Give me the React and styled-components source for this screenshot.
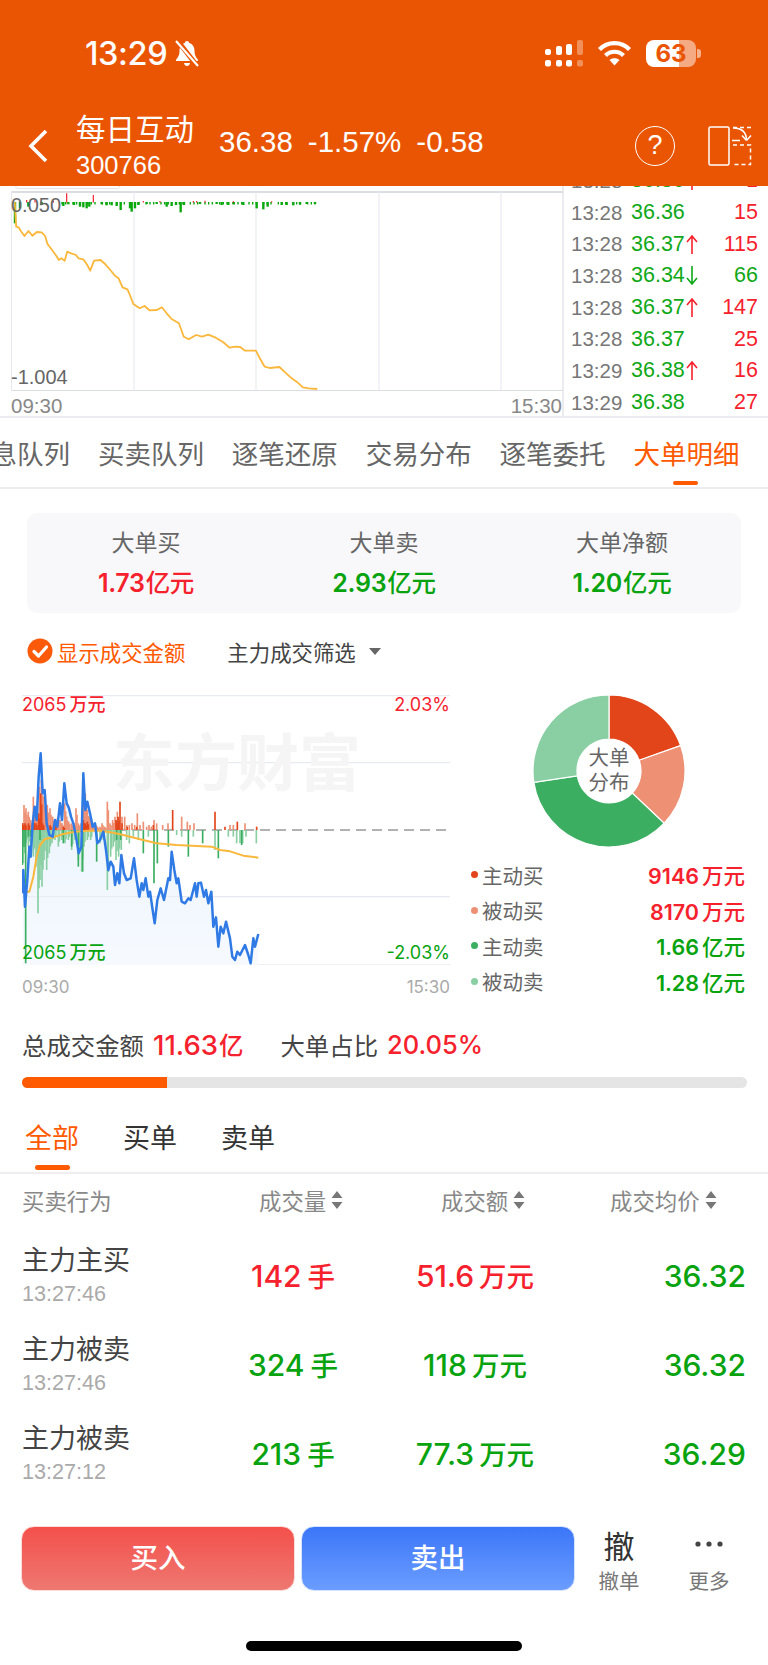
import React from 'react'
import styled, { createGlobalStyle } from 'styled-components'

const SANS = `"Liberation Sans", "Noto Sans CJK SC", sans-serif`
const MEDIUM = `Inter, "Noto Sans CJK SC", sans-serif`
const ORANGE = '#ff5a00'
const RED = '#f5222d'
const GREEN = '#08a30f'

const Global = createGlobalStyle`
  html, body { margin: 0; padding: 0; background: #fff; }
  body { font-family: ${SANS}; color: #333; }
  * { box-sizing: border-box; }
`

const Page = styled.div`
  position: relative;
  width: 768px;
  height: 1665px;
  overflow: hidden;
  background: #fff;
`

/* header */
const Header = styled.header`
  position: relative;
  z-index: 2;
  height: 186px;
  background: #ea5504;
  color: #fff;
`
const StatusBar = styled.div`
  display: flex;
  align-items: center;
  height: 106px;
  padding: 0 67px 0 85px;
`
const Clock = styled.span`
  font: 500 32.5px ${MEDIUM};
  letter-spacing: -0.4px;
`
const StatusRight = styled.div`
  display: flex;
  align-items: center;
  margin-left: auto;
`
const Battery = styled.div`
  position: relative;
  width: 50px;
  height: 27px;
  margin-left: 14px;
  border-radius: 8px;
  overflow: hidden;
  background: linear-gradient(90deg, #fff 66%, rgba(255, 255, 255, 0.5) 66%);
  color: #ea5504;
  font: 700 24px/27px ${MEDIUM};
  text-align: center;
`
const BatteryNub = styled.div`
  width: 4px;
  height: 9px;
  margin-left: 1px;
  border-radius: 0 3px 3px 0;
  background: rgba(255, 255, 255, 0.55);
`
const NavRow = styled.div`
  display: flex;
  align-items: center;
  height: 80px;
  padding: 0 16px 0 28px;
`
const Titles = styled.div`
  width: 120px;
  height: 80px;
  margin-left: 28px;
  padding-top: 7px;
`
const Name = styled.div`
  font-size: 29.5px;
  line-height: 34px;
  white-space: nowrap;
`
const Code = styled.div`
  font-size: 25.5px;
  line-height: 36px;
`
const Quote = styled.div`
  display: flex;
  gap: 15px;
  margin: 0 0 9px 23px;
  font-size: 29.5px;
`
const Help = styled.div`
  width: 40px;
  height: 40px;
  margin-left: auto;
  margin-right: 33px;
  border: 1.5px solid #fff;
  border-radius: 50%;
  font-size: 27px;
  line-height: 37px;
  text-align: center;
`

/* minute chart and tape */
const TopPanel = styled.section`
  position: relative;
  display: flex;
  height: 232px;
  overflow: hidden;
  border-bottom: 2px solid #ececf0;
`
const ChartSide = styled.div`
  position: relative;
  width: 564px;
  padding: 5px 0 0 11px;
  border-right: 2px solid #ececf0;
`
const Peeking = styled.div`
  position: absolute;
  left: 15px;
  top: -8px;
  width: 105px;
  height: 11px;
  border: 1px solid #e6e6e6;
  border-radius: 3px;
`
const AxisLabel = styled.span`
  position: absolute;
  left: ${p => p.$left}px;
  top: ${p => p.$top}px;
  color: #666;
  font-size: 20px;
  line-height: 22px;
`
const TimeAxis = styled.div`
  display: flex;
  justify-content: space-between;
  margin-top: 3px;
  color: #888;
  font-size: 20.5px;
  line-height: 24px;
`
const Tape = styled.div`
  flex: 1;
  margin-top: -21px;
  padding: 0 10px 0 7px;
`
const TapeRow = styled.div`
  display: flex;
  align-items: center;
  height: 31.7px;
  font-size: 21.5px;
`
const TapeTime = styled.span`
  width: 60px;
  color: #777;
  font-size: 20.5px;
`
const TapePrice = styled.span`
  color: #10a818;
`
const TapeVol = styled.span`
  margin-left: auto;
  color: ${p => (p.$down ? '#10a818' : RED)};
`
const TapeArrow = styled.svg`
  margin-left: 1px;
  stroke: ${p => (p.$down ? '#10a818' : RED)};
  transform: ${p => (p.$down ? 'rotate(180deg)' : 'none')};
`

/* tabs */
const TabRow = styled.nav`
  display: flex;
  gap: 27.9px;
  height: 71px;
  margin-left: -36px;
  width: 804px;
  border-bottom: 2px solid #ececf0;
`
const Tab = styled.div`
  position: relative;
  flex: none;
  color: ${p => (p.$active ? ORANGE : '#666')};
  font-size: 26.5px;
  line-height: 74px;
  white-space: nowrap;
  &::after {
    content: '';
    display: ${p => (p.$active ? 'block' : 'none')};
    position: absolute;
    left: 40px;
    bottom: 2px;
    width: 25px;
    height: 4px;
    border-radius: 2px;
    background: ${ORANGE};
  }
`

/* summary */
const Summary = styled.div`
  display: grid;
  grid-template-columns: repeat(3, 1fr);
  width: 714px;
  height: 100px;
  margin: 24px 0 0 27px;
  padding-top: 14px;
  border-radius: 11px;
  background: #f8f8fa;
  text-align: center;
`
const SummaryLabel = styled.div`
  color: #666;
  font-size: 23px;
  line-height: 32px;
`
const SummaryValue = styled.div`
  margin-top: 8px;
  color: ${p => p.$color};
  font: 600 25px/32px ${MEDIUM};
  letter-spacing: -0.3px;
`
const FilterRow = styled.div`
  display: flex;
  align-items: center;
  height: 26px;
  margin: 25px 0 0 27px;
`
const FilterOn = styled.span`
  margin-left: 4px;
  color: ${ORANGE};
  font-size: 21.4px;
`
const FilterOption = styled.span`
  margin: 0 13px 0 42px;
  color: #444;
  font-size: 21.4px;
`

/* big order chart */
const ChartRow = styled.section`
  display: flex;
  gap: 20px;
  margin: 31px 0 0 22px;
`
const ChartBox = styled.div`
  position: relative;
  width: 428px;
  height: 270px;
`
const ChartLabel = styled.span`
  position: absolute;
  ${p => (p.$right ? 'right: 0' : 'left: 0')};
  ${p => (p.$bottom ? 'bottom: 1px' : 'top: -1px')};
  color: ${p => p.$color};
  font: 400 18px/22px ${MEDIUM};
`
const Watermark = styled.span`
  position: absolute;
  left: 91px;
  top: 29px;
  color: #f5f5f6;
  font: 700 62px/70px "Noto Sans CJK SC", sans-serif;
  white-space: nowrap;
`
const SmallAxis = styled.div`
  display: flex;
  justify-content: space-between;
  margin-top: 10px;
  color: #aaa;
  font: 400 17px/24px ${MEDIUM};
`
const Side = styled.div`
  width: 275px;
`
const PieBox = styled.div`
  position: relative;
  width: 152px;
  height: 152px;
  margin-left: 63px;
`
const PieCenter = styled.div`
  position: absolute;
  inset: 0;
  display: flex;
  align-items: center;
  justify-content: center;
  padding-bottom: 2px;
  color: #666;
  font-size: 20.5px;
  line-height: 25px;
  text-align: center;
`
const Legend = styled.div`
  margin-top: 10px;
`
const LegendRow = styled.div`
  display: flex;
  align-items: center;
  height: 35.5px;
`
const Dot = styled.i`
  width: 7px;
  height: 7px;
  margin: 0 4px 0 1px;
  border-radius: 50%;
  background: ${p => p.$color};
`
const LegendName = styled.span`
  color: #666;
  font-size: 20.5px;
`
const LegendValue = styled.span`
  margin-left: auto;
  color: ${p => p.$color};
  font: 600 21.5px ${MEDIUM};
`
const Unit = styled.span`
  margin-left: ${p => p.$gap ?? 3}px;
  ${p => p.$size && `font-size: ${p.$size}px;`}
  font-weight: 500;
`

/* total */
const TotalRow = styled.div`
  display: flex;
  align-items: center;
  height: 30px;
  margin: 30px 0 0 22px;
  font-size: 24.4px;
`
const TotalLabel = styled.span`
  margin-left: ${p => p.$offset || 0}px;
  color: #444;
`
const TotalValue = styled.span`
  margin-left: 9px;
  color: ${RED};
  font: 500 ${p => p.$size}px ${MEDIUM};
`
const Track = styled.div`
  width: 725px;
  height: 11px;
  margin: 18px 0 0 22px;
  border-radius: 6px;
  overflow: hidden;
  background: #e5e5e5;
`
const Fill = styled.div`
  height: 100%;
  background: ${ORANGE};
`

/* trade list */
const SubTabs = styled.nav`
  display: flex;
  gap: 44px;
  height: 68px;
  margin-top: 18px;
  padding: 15px 0 0 25px;
  border-bottom: 2px solid #eeeef0;
`
const SubTab = styled.div`
  position: relative;
  color: ${p => (p.$active ? ORANGE : '#333')};
  font-size: 27px;
  line-height: 36px;
  &::after {
    content: '';
    display: ${p => (p.$active ? 'block' : 'none')};
    position: absolute;
    left: 10px;
    top: 44px;
    width: 35px;
    height: 5px;
    border-radius: 3px;
    background: ${ORANGE};
  }
`
const HeadRow = styled.div`
  display: grid;
  grid-template-columns: 237px 182px 169px 1fr;
  align-items: center;
  height: 57px;
  padding: 0 0 6px 22px;
  color: #888;
  font-size: 22.4px;
`
const HeadCell = styled.div`
  display: flex;
  align-items: center;
  gap: 5px;
`
const TradeRow = styled.div`
  display: grid;
  grid-template-columns: 178px 186px 178px 182px;
  height: 89px;
  padding-left: 22px;
`
const Action = styled.div`
  padding-top: 13px;
`
const ActionName = styled.div`
  color: #444;
  font-size: 27px;
  line-height: 34px;
`
const ActionTime = styled.div`
  margin-top: 2px;
  color: #aaa;
  font-size: 21.6px;
  line-height: 28px;
`
const TradeValue = styled.div`
  padding-top: 28px;
  color: ${p => p.$color};
  font: 500 30px/34px ${MEDIUM};
  text-align: ${p => p.$align || 'center'};
`

/* bottom actions */
const ActionBar = styled.div`
  display: flex;
  gap: 6px;
  margin: 28px 0 0 21px;
`
const TradeButton = styled.div`
  width: 274px;
  height: 65px;
  border: 1px solid ${p => (p.$sell ? '#d6e3ff' : '#fcdcdb')};
  border-radius: 13px;
  background: ${p =>
    p.$sell
      ? 'linear-gradient(180deg, #3b76f8, #6b9dff)'
      : 'linear-gradient(180deg, #f4504b, #ee7871)'};
  color: #fff;
  font-size: 27.5px;
  font-weight: 500;
  line-height: 63px;
  text-align: center;
`
const Tools = styled.div`
  display: flex;
  margin-left: -7px;
`
const Tool = styled.div`
  display: flex;
  flex-direction: column;
  align-items: center;
  width: 90px;
`
const ToolGlyph = styled.div`
  display: flex;
  align-items: center;
  justify-content: center;
  height: 36px;
  color: #333;
  font-size: 31px;
`
const ToolName = styled.div`
  margin-top: 7px;
  color: #777;
  font-size: 20.5px;
  line-height: 26px;
`
const HomeBar = styled.div`
  width: 276px;
  height: 10px;
  margin: 46px 0 0 246px;
  border-radius: 5px;
  background: #000;
`

/* chart data, digitised from the picture */
const minuteLine = [[30,95],[33,170],[38,172],[42,182],[50,198],[58,183],[66,197],[75,186],[85,187],[92,198],[97,222],[105,238],[115,258],[120,270],[125,265],[132,272],[137,245],[145,250],[155,255],[160,265],[170,268],[178,285],[184,302],[192,272],[205,270],[215,283],[225,300],[235,318],[242,325],[250,352],[260,358],[265,375],[272,402],[285,415],[295,408],[305,421],[320,420],[330,412],[340,430],[350,447],[365,460],[375,500],[385,508],[400,495],[412,500],[425,494],[440,503],[455,516],[468,533],[480,530],[490,531],[500,542],[522,542],[530,565],[540,590],[550,594],[570,591],[580,605],[595,625],[605,635],[618,652],[630,655],[647,657]]
  .map(([x, y]) => `${(x / 2.04 - 11).toFixed(1)},${((y - 63) / 3).toFixed(1)}`)
  .join(' ')
const minuteGreen = [[45,130],[60,85],[85,80],[125,75],[190,78],[205,73],[222,75],[240,80],[250,82],[260,85],[268,80],[305,73],[320,76],[335,76],[350,78],[362,90],[390,85],[395,95],[405,85],[415,75],[440,72],[470,72],[500,80],[515,78],[528,75],[542,97],[552,75],[600,70],[650,72],[665,75],[685,75],[700,73],[730,75],[770,85],[790,88],[803,80],[845,75],[860,75],[880,76],[900,74],[920,72],[945,70]]
const minuteTicks = Array.from({ length: 70 }, (_, i) => 186 + i * 11).filter(x => x % 4 !== 0)
const minuteRed = [[80,60],[105,60],[160,62],[200,40],[280,45],[430,63],[480,63],[580,63],[590,63],[615,62],[700,64],[815,64]]

const blue = '68,640 70,570 75,680 82,600 88,500 92,530 98,430 104,380 110,420 116,290 122,220 128,340 134,330 140,430 148,465 158,470 165,420 172,440 180,370 186,420 193,310 200,370 207,385 213,410 220,430 228,470 236,520 244,500 250,280 256,390 262,365 270,400 278,440 285,430 292,490 300,480 310,455 318,510 325,570 332,545 340,560 345,615 352,580 358,610 364,525 372,580 380,600 392,595 402,535 410,600 418,650 425,610 430,630 437,595 445,650 450,635 458,690 464,730 472,660 482,625 492,660 505,595 510,600 515,515 523,570 530,610 535,595 545,665 555,670 565,655 572,660 585,610 590,650 595,610 603,608 612,650 618,630 625,670 634,635 640,740 648,712 655,800 662,740 670,760 678,725 690,775 697,830 705,840 712,815 720,825 735,795 745,825 752,850 760,775 765,800 775,762'
const yellow = '78,635 88,635 100,590 110,530 120,495 135,477 160,472 190,462 220,456 260,452 300,452 340,458 370,465 420,478 470,490 530,495 590,498 635,500 660,510 690,514 730,527 775,533'
const lightRed = [[68,430],[72,375],[78,385],[85,395],[92,420],[100,350],[106,380],[112,380],[118,320],[124,300],[130,350],[136,340],[142,375],[150,385],[158,410],[165,430],[172,415],[180,420],[186,430],[194,370],[200,410],[206,425],[214,430],[222,430],[228,385],[235,430],[243,430],[250,350],[256,340],[262,390],[268,410],[274,415],[280,440],[286,430],[292,440],[300,440],[306,430],[314,440],[322,365],[330,430],[338,420],[345,410],[352,395],[366,410],[374,410],[380,435],[388,435],[396,430],[404,435],[412,400],[420,435],[430,425],[440,440],[447,435],[454,440],[462,420],[470,430],[488,435],[504,430],[545,410],[562,425],[570,435],[582,430],[690,435],[700,435],[735,430]]
const darkRed = [[68,430],[75,430],[85,430],[100,420],[108,430],[116,400],[122,340],[128,430],[150,435],[165,435],[190,440],[250,420],[256,430],[262,425],[348,420],[354,410],[360,365],[366,430],[382,440],[410,440],[460,435],[518,390],[645,395],[675,440],[712,425],[770,440]]
const lightGreen = [[70,550],[78,490],[85,500],[92,510],[100,530],[108,560],[114,700],[120,600],[126,620],[132,540],[140,570],[148,520],[156,490],[165,480],[175,500],[185,480],[195,490],[205,480],[215,510],[225,480],[235,540],[245,575],[252,500],[262,480],[272,480],[300,490],[310,480],[322,630],[332,530],[340,500],[348,540],[356,530],[364,510],[380,480],[388,490],[400,470],[415,480],[445,470],[530,465],[545,470],[580,470],[645,510],[685,470],[700,470],[710,490],[720,490],[728,490],[738,470],[769,490]]
const darkGreen = [[67,555],[72,500],[77,850],[85,470],[92,470],[120,480],[190,490],[215,500],[235,560],[248,575],[290,545],[350,480],[362,480],[430,520],[462,610],[472,550],[505,500],[565,530],[608,490],[655,535],[725,495]]

// the first hour is denser than the points above, so fill in between them
const thicken = data =>
  data.flatMap(([x, y]) => (x < 360 ? [[x, y], [x + 3, y + (450 - y) * 0.3]] : [[x, y]]))

const Bars = ({ data, color, width = 5 }) => (
  <g stroke={color} strokeWidth={width}>
    {data.map(([x, y]) => (
      <line key={`${x}-${y}`} x1={x} x2={x} y1={450} y2={y} />
    ))}
  </g>
)

const MinuteChart = () => (
  <svg width="552" height="200" viewBox="0 0 552 200" style={{ display: 'block' }}>
    <path d="M0 1H552M0 200H552" stroke="#dcdde3" strokeWidth="2" />
    <path d="M.5 0V200M123 0V200M245 0V200M368 0V200M490 0V200" stroke="#e6e7ef" strokeWidth="1" />
    <g stroke="#0aa80f" strokeWidth="2.4">
      {minuteGreen.map(([x, y]) => (
        <line key={x} x1={x / 3 - 11} x2={x / 3 - 11} y1="11" y2={Math.max(y / 3 - 11, 13)} />
      ))}
    </g>
    <g stroke="#0aa80f" strokeWidth="1.4">
      {minuteTicks.map(x => (
        <line key={x} x1={x / 3 - 11} x2={x / 3 - 11} y1="11" y2="13.5" />
      ))}
    </g>
    <g stroke="#f5222d" strokeWidth="1.2">
      {minuteRed.map(([x, y]) => (
        <line key={x} x1={x / 3 - 11} x2={x / 3 - 11} y1="11.6" y2={y / 3 - 11} />
      ))}
    </g>
    <polyline points={minuteLine} fill="none" stroke="#fbb73b" strokeWidth="1.8" strokeLinejoin="round" />
  </svg>
)

const OrderChart = () => (
  <svg width="428" height="270" viewBox="66 45 1284 810" style={{ display: 'block' }}>
    <defs>
      <linearGradient id="area" x1="0" x2="0" y1="0" y2="1">
        <stop offset="0" stopColor="#e9f2fb" />
        <stop offset="1" stopColor="#f6faff" />
      </linearGradient>
    </defs>
    <path d="M66 47H1350M66 248H1350M66 650H1350M66 855H1350" stroke="#e8eaf1" strokeWidth="4" />
    <polygon points={`68,855 ${blue} 775,855`} fill="url(#area)" />
    <path d="M66 650H1350" stroke="#e8eaf1" strokeWidth="4" opacity=".7" />
    <path d="M66 450H1350" stroke="#999" strokeWidth="5" strokeDasharray="30 18" strokeDashoffset="6" />
    <Bars data={thicken(lightRed)} color="#ee9074" />
    <Bars data={thicken(darkRed)} color="#e3451a" />
    <Bars data={thicken(lightGreen)} color="#8acfa3" />
    <Bars data={darkGreen} color="#3cae62" />
    <polyline points={yellow} fill="none" stroke="#fbb73b" strokeWidth="6" strokeLinejoin="round" />
    <polyline points={blue} fill="none" stroke="#2f7ae5" strokeWidth="7.500" strokeLinejoin="round" />
  </svg>
)

const slices = [
  { value: 9146, color: '#e3451a' },
  { value: 8170, color: '#ee9074' },
  { value: 16600, color: '#3cae62' },
  { value: 12800, color: '#8acfa3' },
]
const Pie = () => {
  const total = slices.reduce((sum, s) => sum + s.value, 0)
  let start = 0
  const point = (a, r) => [76 + r * Math.sin(a), 76 - r * Math.cos(a)]
  return (
    <svg width="152" height="152" viewBox="0 0 152 152">
      {slices.map(s => {
        const end = start + (s.value / total) * Math.PI * 2
        const [x1, y1] = point(start, 76)
        const [x2, y2] = point(end, 76)
        const [x3, y3] = point(end, 32)
        const [x4, y4] = point(start, 32)
        const large = end - start > Math.PI ? 1 : 0
        start = end
        return (
          <path
            key={s.color}
            d={`M${x1} ${y1}A76 76 0 ${large} 1 ${x2} ${y2}L${x3} ${y3}A32 32 0 ${large} 0 ${x4} ${y4}Z`}
            fill={s.color}
            stroke="#fff"
            strokeWidth="1.2"
          />
        )
      })}
    </svg>
  )
}

const BellOff = () => (
  <svg width="26" height="27" viewBox="0 0 26 27" style={{ marginLeft: 7 }}>
    <path d="M13 1c1.4 0 2 .9 2.2 2 3.6 1 5.3 4 5.3 8 0 4 1.200 6 3.300 8.400.6.800.2 1.600-.8 1.600H3c-1 0-1.400-.8-.8-1.600C4.300 17 5.500 15 5.500 11c0-4 1.700-7 5.300-8 .2-1.100.8-2 2.200-2Z" fill="#fff" />
    <path d="M10 23h6c-.3 2-1.500 3-3 3s-2.700-1-3-3Z" fill="#fff" />
    <path d="M3 0 24 27" stroke="#ea5504" strokeWidth="5" />
    <path d="M2 1 24 26" stroke="#fff" strokeWidth="2.200" />
  </svg>
)

const Signal = () => (
  <svg width="41" height="27" viewBox="0 0 41 27" fill="#fff">
    <rect x="0" y="9" width="6" height="6" rx="2" />
    <rect x="11" y="6" width="6" height="9" rx="2" />
    <rect x="21" y="4" width="6" height="11" rx="2" />
    <rect x="32" y="0" width="6" height="15" rx="2" opacity=".35" />
    <rect x="0" y="20" width="6" height="6.500" rx="2" />
    <rect x="11" y="20" width="6" height="6.500" rx="2" />
    <rect x="21" y="20" width="6" height="6.500" rx="2" />
    <rect x="32" y="20" width="6" height="6.500" rx="2" opacity=".35" />
  </svg>
)

const Wifi = () => (
  <svg width="35" height="26" viewBox="0 0 35 26" style={{ marginLeft: 11 }} fill="none" stroke="#fff" strokeWidth="4.200">
    <path d="M2.500 9.500C10.500 1 24.500 1 32.500 9.500" />
    <path d="M8.500 15.500C13.500 10.500 21.500 10.500 26.500 15.500" />
    <path d="M17.500 25.500 12.500 20C15 17.500 20 17.500 22.500 20Z" fill="#fff" stroke="none" />
  </svg>
)

const Back = () => (
  <svg width="20" height="34" viewBox="0 0 20 34" fill="none" stroke="#fff" strokeWidth="3.600">
    <path d="M18 2 3 17 18 32" />
  </svg>
)

const SplitScreen = () => (
  <svg width="44" height="40" viewBox="0 0 44 40" fill="none" stroke="#fff" strokeWidth="1.500">
    <rect x="1" y="1" width="20" height="38" rx="1.500" />
    <path d="M25 1.500h18M43 1.500v0M25 19h17.500v19.500H25" strokeDasharray="4 3" />
    <path d="M25 2c9 0 13.500 4 13.500 12.500M38.500 14.500 34 9.500M38.500 14.500 43 9.500M24 14.500h8" />
  </svg>
)

const CheckCircle = () => (
  <svg width="26" height="26" viewBox="0 0 26 26">
    <circle cx="13" cy="13" r="12.500" fill="#fb5a0a" />
    <path d="M7 13.500 11.500 18 19.500 9" fill="none" stroke="#fff" strokeWidth="3.200" strokeLinecap="round" strokeLinejoin="round" />
  </svg>
)

const Caret = () => (
  <svg width="12" height="7" viewBox="0 0 12 7">
    <path d="M0 0H12L6 7Z" fill="#666" />
  </svg>
)

const Sort = () => (
  <svg width="12" height="20" viewBox="0 0 12 20" fill="#777">
    <path d="M6 1 11.500 8H.5ZM6 19 .5 12H11.500Z" />
  </svg>
)

const ticks = [
  ['13:28', '36.36', 'up', '1', false],
  ['13:28', '36.36', '', '15', false],
  ['13:28', '36.37', 'up', '115', false],
  ['13:28', '36.34', 'down', '66', true],
  ['13:28', '36.37', 'up', '147', false],
  ['13:28', '36.37', '', '25', false],
  ['13:29', '36.38', 'up', '16', false],
  ['13:29', '36.38', '', '27', false],
]
const tabs = ['消息队列', '买卖队列', '逐笔还原', '交易分布', '逐笔委托', '大单明细']
const legend = [
  ['主动买', '9146', '万元', '#e3451a', RED],
  ['被动买', '8170', '万元', '#ee9074', RED],
  ['主动卖', '1.66', '亿元', '#3cae62', GREEN],
  ['被动卖', '1.28', '亿元', '#8acfa3', GREEN],
]
const trades = [
  ['主力主买', '13:27:46', '142', '51.6', '36.32', RED],
  ['主力被卖', '13:27:46', '324', '118', '36.32', GREEN],
  ['主力被卖', '13:27:12', '213', '77.3', '36.29', GREEN],
]

const App = () => (
  <Page>
    <Global />
    <Header>
      <StatusBar>
        <Clock>13:29</Clock>
        <BellOff />
        <StatusRight>
          <Signal />
          <Wifi />
          <Battery>63</Battery>
          <BatteryNub />
        </StatusRight>
      </StatusBar>
      <NavRow>
        <Back />
        <Titles>
          <Name>每日互动</Name>
          <Code>300766</Code>
        </Titles>
        <Quote>
          <span>36.38</span>
          <span>-1.57%</span>
          <span>-0.58</span>
        </Quote>
        <Help>?</Help>
        <SplitScreen />
      </NavRow>
    </Header>

    <TopPanel>
      <ChartSide>
        <Peeking />
        <MinuteChart />
        <AxisLabel $left={11} $top={8}>0.050</AxisLabel>
        <AxisLabel $left={11} $top={180}>-1.004</AxisLabel>
        <TimeAxis>
          <span>09:30</span>
          <span>15:30</span>
        </TimeAxis>
      </ChartSide>
      <Tape>
        {ticks.map(([time, price, dir, vol, down], i) => (
          <TapeRow key={i}>
            <TapeTime>{time}</TapeTime>
            <TapePrice>{price}</TapePrice>
            {dir && (
              <TapeArrow $down={dir === 'down'} width="12" height="21" viewBox="0 0 12 21" fill="none" strokeWidth="1.6">
                <path d="M6 20V2M1 8 6 2 11 8" />
              </TapeArrow>
            )}
            <TapeVol $down={down}>{vol}</TapeVol>
          </TapeRow>
        ))}
      </Tape>
    </TopPanel>

    <TabRow>
      {tabs.map((t, i) => (
        <Tab key={t} $active={i === 5}>{t}</Tab>
      ))}
    </TabRow>

    <Summary>
      <div>
        <SummaryLabel>大单买</SummaryLabel>
        <SummaryValue $color={RED}>1.73<Unit $gap={1} $size={24.5}>亿元</Unit></SummaryValue>
      </div>
      <div>
        <SummaryLabel>大单卖</SummaryLabel>
        <SummaryValue $color={GREEN}>2.93<Unit $gap={1} $size={24.5}>亿元</Unit></SummaryValue>
      </div>
      <div>
        <SummaryLabel>大单净额</SummaryLabel>
        <SummaryValue $color={GREEN}>1.20<Unit $gap={1} $size={24.5}>亿元</Unit></SummaryValue>
      </div>
    </Summary>

    <FilterRow>
      <CheckCircle />
      <FilterOn>显示成交金额</FilterOn>
      <FilterOption>主力成交筛选</FilterOption>
      <Caret />
    </FilterRow>

    <ChartRow>
      <div>
        <ChartBox>
          <Watermark>东方财富</Watermark>
          <OrderChart />
          <ChartLabel $color={RED}>2065<Unit>万元</Unit></ChartLabel>
          <ChartLabel $color={RED} $right>2.03%</ChartLabel>
          <ChartLabel $color={GREEN} $bottom>2065<Unit>万元</Unit></ChartLabel>
          <ChartLabel $color={GREEN} $bottom $right>-2.03%</ChartLabel>
        </ChartBox>
        <SmallAxis>
          <span>09:30</span>
          <span>15:30</span>
        </SmallAxis>
      </div>
      <Side>
        <PieBox>
          <Pie />
          <PieCenter>大单<br />分布</PieCenter>
        </PieBox>
        <Legend>
          {legend.map(([name, num, unit, dot, color]) => (
            <LegendRow key={name}>
              <Dot $color={dot} />
              <LegendName>{name}</LegendName>
              <LegendValue $color={color}>{num}<Unit>{unit}</Unit></LegendValue>
            </LegendRow>
          ))}
        </Legend>
      </Side>
    </ChartRow>

    <TotalRow>
      <TotalLabel>总成交金额</TotalLabel>
      <TotalValue $size={27.5}>11.63<Unit $gap={1} $size={24.5}>亿</Unit></TotalValue>
      <TotalLabel $offset={37}>大单占比</TotalLabel>
      <TotalValue $size={25.5}>20.05%</TotalValue>
    </TotalRow>
    <Track>
      <Fill style={{ width: `${(145 / 725) * 100}%` }} />
    </Track>

    <SubTabs>
      <SubTab $active>全部</SubTab>
      <SubTab>买单</SubTab>
      <SubTab>卖单</SubTab>
    </SubTabs>
    <HeadRow>
      <HeadCell>买卖行为</HeadCell>
      <HeadCell>成交量<Sort /></HeadCell>
      <HeadCell>成交额<Sort /></HeadCell>
      <HeadCell>成交均价<Sort /></HeadCell>
    </HeadRow>
    {trades.map(([name, time, vol, amount, price, color], i) => (
      <TradeRow key={i}>
        <Action>
          <ActionName>{name}</ActionName>
          <ActionTime>{time}</ActionTime>
        </Action>
        <TradeValue $color={color}>{vol}<Unit $gap={6} $size={27.5}>手</Unit></TradeValue>
        <TradeValue $color={color}>{amount}<Unit $gap={5} $size={27.5}>万元</Unit></TradeValue>
        <TradeValue $color={GREEN} $align="right">{price}</TradeValue>
      </TradeRow>
    ))}

    <ActionBar>
      <TradeButton>买入</TradeButton>
      <TradeButton $sell>卖出</TradeButton>
      <Tools>
        <Tool>
          <ToolGlyph>撤</ToolGlyph>
          <ToolName>撤单</ToolName>
        </Tool>
        <Tool>
          <ToolGlyph>
            <svg width="28" height="6" viewBox="0 0 28 6" fill="#444">
              <circle cx="3" cy="3" r="2.600" />
              <circle cx="14" cy="3" r="2.600" />
              <circle cx="25" cy="3" r="2.600" />
            </svg>
          </ToolGlyph>
          <ToolName>更多</ToolName>
        </Tool>
      </Tools>
    </ActionBar>
    <HomeBar />
  </Page>
)

export default App
